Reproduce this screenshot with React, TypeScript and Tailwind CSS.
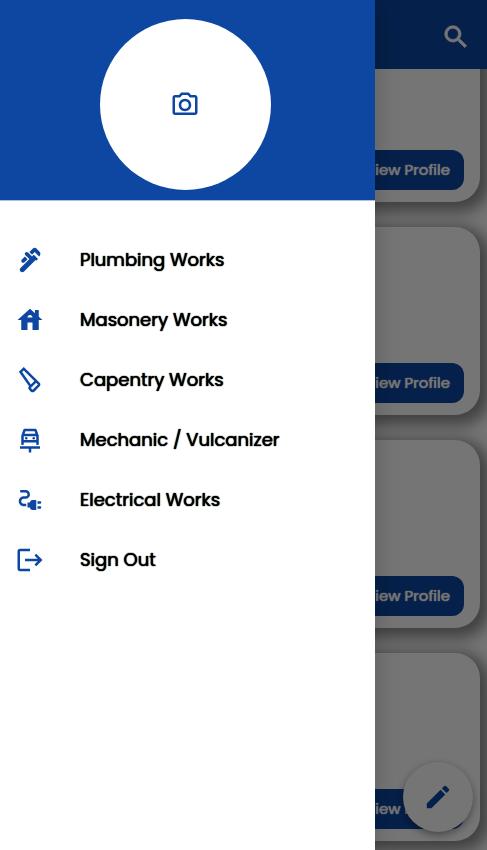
import type { IconType } from "react-icons";
import {
  MdOutlinePlumbing,
  MdHouse,
  MdOutlineCarpenter,
  MdOutlineCarRepair,
  MdOutlineElectricalServices,
  MdLogout,
  MdOutlinePhotoCamera,
  MdEdit,
} from "react-icons/md";

const menu: { label: string; Icon: IconType }[] = [
  { label: "Plumbing Works", Icon: MdOutlinePlumbing },
  { label: "Masonery Works", Icon: MdHouse },
  { label: "Capentry Works", Icon: MdOutlineCarpenter },
  { label: "Mechanic / Vulcanizer", Icon: MdOutlineCarRepair },
  { label: "Electrical Works", Icon: MdOutlineElectricalServices },
  { label: "Sign Out", Icon: MdLogout },
];

function ProfileCard() {
  return (
    <article className="flex h-[188px] shrink-0 items-end justify-end rounded-[25px] bg-white px-4 pb-3 shadow-[5px_5px_15px_5px_rgba(0,0,0,0.45)]">
      <button
        type="button"
        className="h-10 rounded-xl bg-[#0d47a1] px-[14px] text-[15px] font-normal whitespace-nowrap text-white [text-shadow:0_0_1px_currentColor,0_0_1px_currentColor]"
      >
        View Profile
      </button>
    </article>
  );
}

function SearchIcon() {
  return (
    <svg viewBox="0 0 24 24" width={30} height={30} fill="currentColor" stroke="currentColor" strokeWidth={0.6} aria-hidden="true">
      <path d="M15.5 14h-.79l-.28-.27A6.471 6.471 0 0 0 16 9.5 6.5 6.5 0 1 0 9.5 16c1.61 0 3.09-.59 4.23-1.57l.27.28v.79l5 4.99L20.49 19l-4.99-5zm-6 0C7.01 14 5 11.99 5 9.5S7.01 5 9.5 5 14 7.01 14 9.5 11.99 14 9.5 14z" />
    </svg>
  );
}

export default function App() {
  return (
    <div className="relative h-screen overflow-hidden bg-white font-['Poppins','Inter',sans-serif]">
      <div className="flex h-full flex-col">
        <header className="flex h-[69px] shrink-0 items-center justify-end bg-[#0d47a1] px-4 pt-1">
          <button type="button" aria-label="Search" className="text-white">
            <SearchIcon />
          </button>
        </header>
        <main className="flex min-h-0 flex-1 flex-col justify-end gap-[25px] overflow-hidden px-[7px] pb-[9px]">
          <ProfileCard />
          <ProfileCard />
          <ProfileCard />
          <ProfileCard />
        </main>
      </div>

      <button
        type="button"
        aria-label="Edit"
        className="absolute right-[14px] bottom-[18px] flex size-[70px] items-center justify-center rounded-full bg-white text-[#0d47a1] shadow-[0_3px_8px_rgba(0,0,0,0.4)]"
      >
        <MdEdit size={30} />
      </button>

      <div className="absolute inset-0 bg-black/54" />

      <aside className="absolute inset-y-0 left-0 w-[77%] bg-white shadow-[0_0_24px_rgba(0,0,0,0.2)]">
        <div className="flex h-[201px] justify-center border-b border-[#a9bfdf] bg-[#0d47a1] pt-[19px] pr-1">
          <button
            type="button"
            aria-label="Change photo"
            className="flex size-[171px] items-center justify-center rounded-full bg-white text-[#0d47a1]"
          >
            <MdOutlinePhotoCamera size={30} />
          </button>
        </div>
        <nav className="pt-[29px]">
          <ul>
            {menu.map(({ label, Icon }) => (
              <li key={label}>
                <a
                  href="#"
                  className="flex h-[60px] items-center gap-[35px] px-[15px] text-lg font-normal text-black [text-shadow:0_0_1px_currentColor,0_0_1px_currentColor]"
                >
                  <Icon size={30} className="shrink-0 text-[#0d47a1]" />
                  {label}
                </a>
              </li>
            ))}
          </ul>
        </nav>
      </aside>
    </div>
  );
}
